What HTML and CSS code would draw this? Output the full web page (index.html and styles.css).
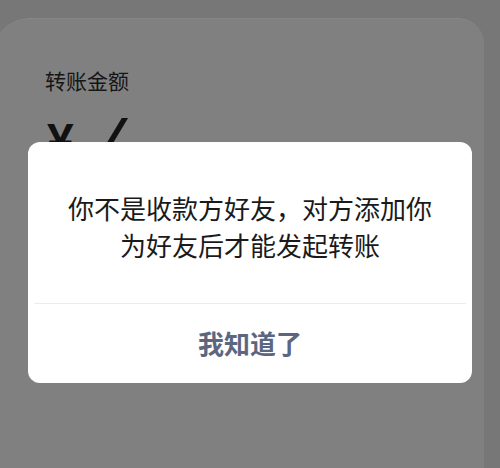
FILE: index.html
```html
<!DOCTYPE html>
<html>
<head>
<meta charset="utf-8">
<title>转账</title>
<link rel="stylesheet" href="styles.css">
</head>
<body>
<div class="sheet">
    <p class="label">转账金额</p>
    <div class="amount"><span class="yen">¥</span><span class="caret">/</span></div>
</div>
<div class="mask"></div>
<div class="dialog">
    <div class="msg">你不是收款方好友，对方添加你<br>为好友后才能发起转账</div>
    <div class="btn">我知道了</div>
</div>
</body>
</html>
```
FILE: styles.css
```css
html,body{ margin:0; padding:0; height:100%;}
body{ background:#777; font-family:"Noto Sans CJK SC","Liberation Sans",sans-serif; overflow:hidden; position:relative;}
p{ margin:0;}
.sheet{ margin:18px 16px 0 -8px; height:450px; background:#808080; border-radius:38px 26px 0 0; border-top:1px solid #868686; padding:48px 0 0 53px; box-sizing:border-box;}
.label{ font-size:21px; line-height:26px; color:#151515;}
.amount{ margin-top:18px; font-size:48px; line-height:54px; font-weight:bold; color:#111; font-family:"Liberation Sans",sans-serif;}
.amount .yen{ margin-left:2px;}
.amount .caret{ display:inline-block; margin-left:30px; font-size:54px; font-style:italic; transform:skewX(-12deg);}
.mask{ position:absolute; left:0; top:0; right:0; bottom:0;}
.dialog{ position:absolute; left:28px; top:142px; width:444px; height:241px; background:#fff; border-radius:12px; overflow:hidden;}
.msg{ height:162px; box-sizing:border-box; padding-top:47px; text-align:center; font-size:26px; line-height:37px; color:#1a1a1a; margin:0 6px; border-bottom:1px solid #ececec;}
.btn{ height:78px; line-height:78px; text-align:center; font-size:26px; font-weight:bold; color:#5b6780;}
```
